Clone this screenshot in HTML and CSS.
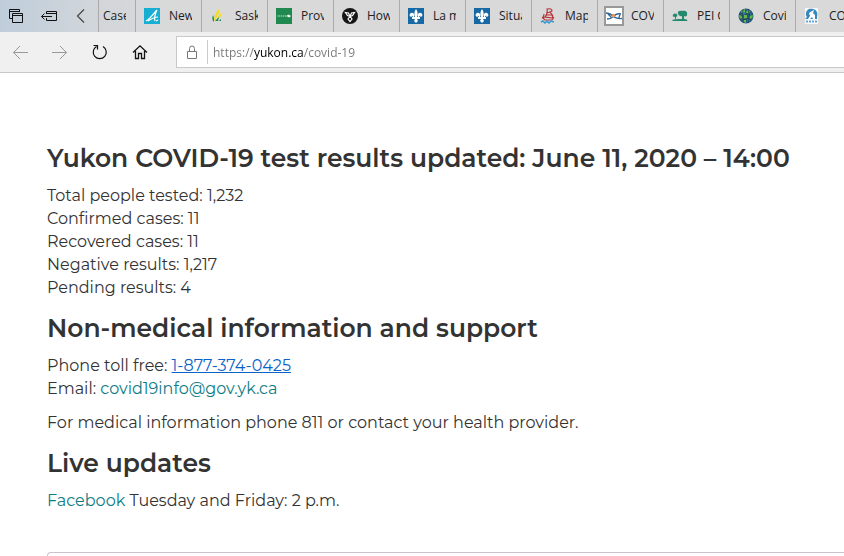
FILE: index.html
```html
<!DOCTYPE html>
<html lang="en">
<head>
<meta charset="utf-8">
<title>COVID-19 | Yukon.ca</title>
<link rel="stylesheet" href="styles.css">
</head>
<body>
<header class="browser">
  <nav class="tabs" aria-label="Open tabs">
    <div class="tab-tools">
      <button class="tool" type="button" aria-label="Tabs you've set aside">
        <svg width="16" height="16" viewBox="0 0 16 16" fill="none" stroke="#111"><path d="M4 10.5H1.500V1.500H11.500V4M1.500 3.500H11.500M4.500 5.500H14.500V14.500H4.500ZM4.500 7.500H14.500"/></svg>
      </button>
      <button class="tool" type="button" aria-label="Set these tabs aside">
        <svg width="18" height="16" viewBox="0 0 18 16" fill="none" stroke="#111"><path d="M6.500 6V3.500H16.500V12.500H6.500V10M6.500 5.500H16.500M1.500 8.500H12M4.500 5.500L1.500 8.500L4.500 11.500"/></svg>
      </button>
      <button class="tool" type="button" aria-label="Scroll tabs left">
        <svg width="16" height="16" viewBox="0 0 16 16" fill="none" stroke="#444" stroke-width="1.200"><path d="M10 1.500L3.500 8L10 14.500"/></svg>
      </button>
    </div>
    <button class="tab tab-first" type="button"><span>Case</span></button>
    <button class="tab" type="button">
      <svg class="fav" viewBox="0 0 16 16"><path fill="#16afd3" d="M0 0H16V16H0Z"/><path d="M2 13C6 11 9 6 13 2C11 6 10 10 11 13M4 13C7 11 10 9 14 9M12 13L14 12" fill="none" stroke="#fff" stroke-width="1.200"/></svg>
      <span>New</span></button>
    <button class="tab" type="button">
      <svg class="fav" viewBox="0 0 16 16"><path fill="#f5dc1c" d="M9 1C10 4 8 8 4 13C4 8 6 4 9 1ZM11 5L11 8L6 13C7 10 9 7 11 5Z"/><path fill="#168b50" d="M3 7C4 9 4 11 4 14C2 12 2 10 3 7ZM5 13L9 9L8 13ZM9 13L11 11L11 13Z"/></svg>
      <span>Sask</span></button>
    <button class="tab" type="button">
      <svg class="fav" viewBox="0 0 16 16"><path fill="#20894f" d="M0 0H16V16H0Z"/><path d="M1 8H11" stroke="#b9dcc8" stroke-dasharray="1.500 .5"/><path d="M10.500 8L12.500 6.500L15 8L13 9.500Z" fill="#fff"/></svg>
      <span>Prov</span></button>
    <button class="tab" type="button">
      <svg class="fav" viewBox="0 0 16 16"><circle cx="8" cy="8" r="8" fill="#161616"/><g fill="none" stroke="#fff" stroke-width="1.200"><path d="M8 8.500L5.500 7.500L3.500 4.500L6.500 5L8 8.500L9.500 5L12.500 4.500L10.500 7.500ZM8 8.500L6 11L8 13.500L10 11Z"/></g></svg>
      <span>How</span></button>
    <button class="tab" type="button">
      <svg class="fav" viewBox="0 0 16 16"><path fill="#1769a5" d="M0 0H16V16H0Z"/><path fill="#fff" d="M8 1C10 4 10 6 9 9H10C9 6 11 4 13 5C15 6 15 9 12 9C13 8 12 7 11 9H12V11H9L10 13L8 15L6 13L7 11H4V9H5C4 7 3 8 4 9C1 9 1 6 3 5C5 4 7 6 6 9H7C6 6 6 4 8 1Z"/></svg>
      <span>La m</span></button>
    <button class="tab" type="button">
      <svg class="fav" viewBox="0 0 16 16"><path fill="#1769a5" d="M0 0H16V16H0Z"/><path fill="#fff" d="M8 1C10 4 10 6 9 9H10C9 6 11 4 13 5C15 6 15 9 12 9C13 8 12 7 11 9H12V11H9L10 13L8 15L6 13L7 11H4V9H5C4 7 3 8 4 9C1 9 1 6 3 5C5 4 7 6 6 9H7C6 6 6 4 8 1Z"/></svg>
      <span>Situa</span></button>
    <button class="tab" type="button">
      <svg class="fav" viewBox="0 0 16 16"><path d="M7 1Q12 0 12 3L10 4Q13 7 13 10L5 9Q8 6 7 1ZM7 5L10 4M6 7L12 7M2 9L5 12L12 12L14 9.500M4 6L3 11" fill="none" stroke="#b6353b" stroke-width="1.200"/><path d="M1 14L3 13L5 15L7 13L9 15L11 13L14 14" fill="none" stroke="#3799d1" stroke-width="1.500"/></svg>
      <span>Map</span></button>
    <button class="tab" type="button">
      <svg class="fav fav-wide" viewBox="0 0 20 20"><path d="M1 1H19V19H1Z" fill="#fff" stroke="#999" stroke-width="2"/><path d="M2 7Q6 7 9 10T18 12.500M3 13Q7 13 10 10T17 8M4 8L7 11M16 8L15 12" fill="none" stroke="#2d6695" stroke-width="1.300"/><path d="M8 8L11 8L11 11L8 11Z" fill="#db9663"/></svg>
      <span>COV</span></button>
    <button class="tab" type="button">
      <svg class="fav" viewBox="0 0 16 16"><path fill="#24896d" d="M6 6C5 3 8 2 10 3C13 2 16 4 15 6C16 8 13 9 12 8L12 11C15 11 16 12 15 13H1L0 12C2 11 7 11 10 11V8C8 9 7 7 6 6ZM1 8.500C0 7 2 5.500 3 5.500C5 5.500 6 7 5 8.500L4 9V11H3V9Z"/></svg>
      <span>PEI G</span></button>
    <button class="tab" type="button">
      <svg class="fav" viewBox="0 0 16 16"><circle cx="8" cy="8" r="7.500" fill="#245b83"/><path fill="#62b849" d="M3 3L7 1L7 4L4 6ZM9 2L12 3L11 6L8 5ZM1 7L4 8L4 11L2 11ZM6 7L9 7L9 10L6 11ZM11 8L15 7L14 11L11 11ZM5 12L8 12L8 15L5 14Z"/><path fill="#38a5df" d="M5 4L8 5L6 7L3 7ZM12 5L14 6L12 7ZM9 11L12 12L10 14ZM4 9L6 10L4 12Z"/><path d="M1 6H15M2 11H14M5 2Q3 8 6 15M10 1Q13 8 10 15" fill="none" stroke="#233a48" stroke-width=".8"/></svg>
      <span>Covi</span></button>
    <button class="tab" type="button">
      <svg class="fav" viewBox="0 0 16 16"><path fill="#f4f8fb" d="M1 0H14V16H1Z"/><path fill="#3687bd" d="M2 6C2 2 5 0 9 1C13 2 14 5 13 9L13 11H1L3 9C2 8 2 7 2 6Z"/><path fill="#fff" d="M5 5L8 3L10 2L9 5L11 7L11 11H9L8 9L6 11H4L6 8Z"/><path d="M2 13.500H13" stroke="#6ba8d1" stroke-width="2" stroke-dasharray="2 1"/></svg>
      <span>COV</span></button>
  </nav>
  <div class="toolbar">
    <div class="nav-buttons">
      <button class="tool" type="button" aria-label="Back"><svg width="16" height="16" viewBox="0 0 16 16" fill="none" stroke="#999"><path d="M16 8.500H1M8 2L1.500 8.500L8 15"/></svg></button>
      <button class="tool" type="button" aria-label="Forward"><svg width="16" height="16" viewBox="0 0 16 16" fill="none" stroke="#999"><path d="M0 8.500H15M8 2L14.500 8.500L8 15"/></svg></button>
      <button class="tool" type="button" aria-label="Refresh"><svg width="16" height="16" viewBox="0 0 16 16" fill="none" stroke="#111" stroke-width="1.200"><path d="M4.500 2.500A6.500 6.500 0 1 0 11 2.500M1.500 1.500H5.500V5.500"/></svg></button>
      <button class="tool" type="button" aria-label="Home"><svg width="16" height="16" viewBox="0 0 16 16" fill="none" stroke="#111" stroke-width="1.300"><path d="M1 8.500L8 1.800L15 8.500M3.500 7V14.500H6.500V9.500H9.500V14.500H12.500V7"/></svg></button>
    </div>
    <div class="address">
      <svg class="lock" width="12" height="14" viewBox="0 0 12 14" fill="none" stroke="#777"><path d="M1.500 6.500H10.500V13.500H1.500ZM3.500 6V3.500Q3.500 1 6 1Q8.500 1 8.500 3.500V6"/></svg>
      <input class="url" type="text" aria-label="Address" value="https://yukon.ca/covid-19" spellcheck="false">
    </div>
  </div>
</header>
<main class="page">
  <h2>Yukon COVID-19 test results updated: June 11, 2020 – 14:00</h2>
  <p>Total people tested: 1,232<br>Confirmed cases: 11<br>Recovered cases: 11<br>Negative results: 1,217<br>Pending results: 4</p>
  <h2>Non-medical information and support</h2>
  <p>Phone toll free: <a class="phone" href="tel:1-877-374-0425">1-877-374-0425</a><br>Email: <a href="mailto:covid19info@gov.yk.ca">covid19info@gov.yk.ca</a></p>
  <p>For medical information phone 811 or contact your health provider.</p>
  <h2>Live updates</h2>
  <p><a href="#updates">Facebook</a> Tuesday and Friday: 2 p.m.</p>
  <section class="panel" id="updates"></section>
</main>
</body>
</html>
```
FILE: styles.css
```css
* { box-sizing: border-box; }

html { height: 100%; }

body {
  display: flex;
  flex-direction: column;
  margin: 0;
  min-height: 100%;
  background: #fff;
  color: #333;
  font: 16px/23px Montserrat, Inter, sans-serif;
}

button {
  margin: 0;
  padding: 0;
  border: 0;
  background: none;
  color: inherit;
  font: inherit;
}

svg { display: block; flex: none; }

.browser {
  color: #222;
  font: 12px/16px "Segoe UI", "Open Sans", sans-serif;
}

.tabs {
  display: flex;
  height: 32px;
  overflow: hidden;
  background: linear-gradient(to right, #bfcddb, #d2d6da 98px, #d9d9d9 180px);
}

.tab-tools {
  display: flex;
  flex: none;
  width: 98px;
}

.tool {
  display: flex;
  flex: 1;
  align-items: center;
  justify-content: center;
}

.tab {
  display: flex;
  flex: none;
  align-items: center;
  gap: 9px;
  width: 66px;
  padding: 0 9px 0 8px;
  border-left: 1px solid #aaa;
  text-align: left;
}

.tab span {
  flex: 1;
  min-width: 0;
  overflow: hidden;
  white-space: nowrap;
}

.tab-first {
  width: 37px;
  padding-left: 4px;
}

.fav { width: 16px; height: 16px; }

.fav-wide {
  width: 20px;
  height: 20px;
  margin: 0 -2px;
}

.toolbar {
  display: flex;
  height: 41px;
  padding-top: 4px;
  border-bottom: 1px solid #c8c9ca;
  background: #f0f0f0;
}

.nav-buttons {
  display: flex;
  flex: none;
  width: 160px;
  height: 32px;
}

.address {
  display: flex;
  flex: 1;
  align-items: center;
  height: 32px;
  margin-left: 16px;
  border: 1px solid #c8c9ca;
  border-right: 0;
  background: #fff;
}

.lock { margin: 0 9px; }

.url {
  flex: 1;
  min-width: 0;
  height: 24px;
  padding: 0 0 0 5px;
  border: 0;
  border-left: 1px solid #ccc;
  outline: 0;
  background: linear-gradient(to right, #777 46px, #000 46px, #000 95px, #777 95px);
  background-clip: text;
  color: transparent;
  font: 12px/16px "Segoe UI", "Open Sans", sans-serif;
}

.page {
  display: flex;
  flex: 1;
  flex-direction: column;
  padding: 69px 0 0 47px;
}

h2 {
  margin: 2px 0 10px;
  font-size: 25px;
  line-height: 32px;
  font-weight: 600;
}

h2:first-child { margin-top: 0; }

p { margin: 0 0 11px; }

a { color: #0e7c85; text-decoration: none; }

.phone { color: #0b62c9; text-decoration: underline; }

.panel {
  flex: 1;
  margin-top: 29px;
  border: 1px solid #cfc0cb;
  border-width: 1px 0 0 1px;
  border-top-left-radius: 4px;
}
```
